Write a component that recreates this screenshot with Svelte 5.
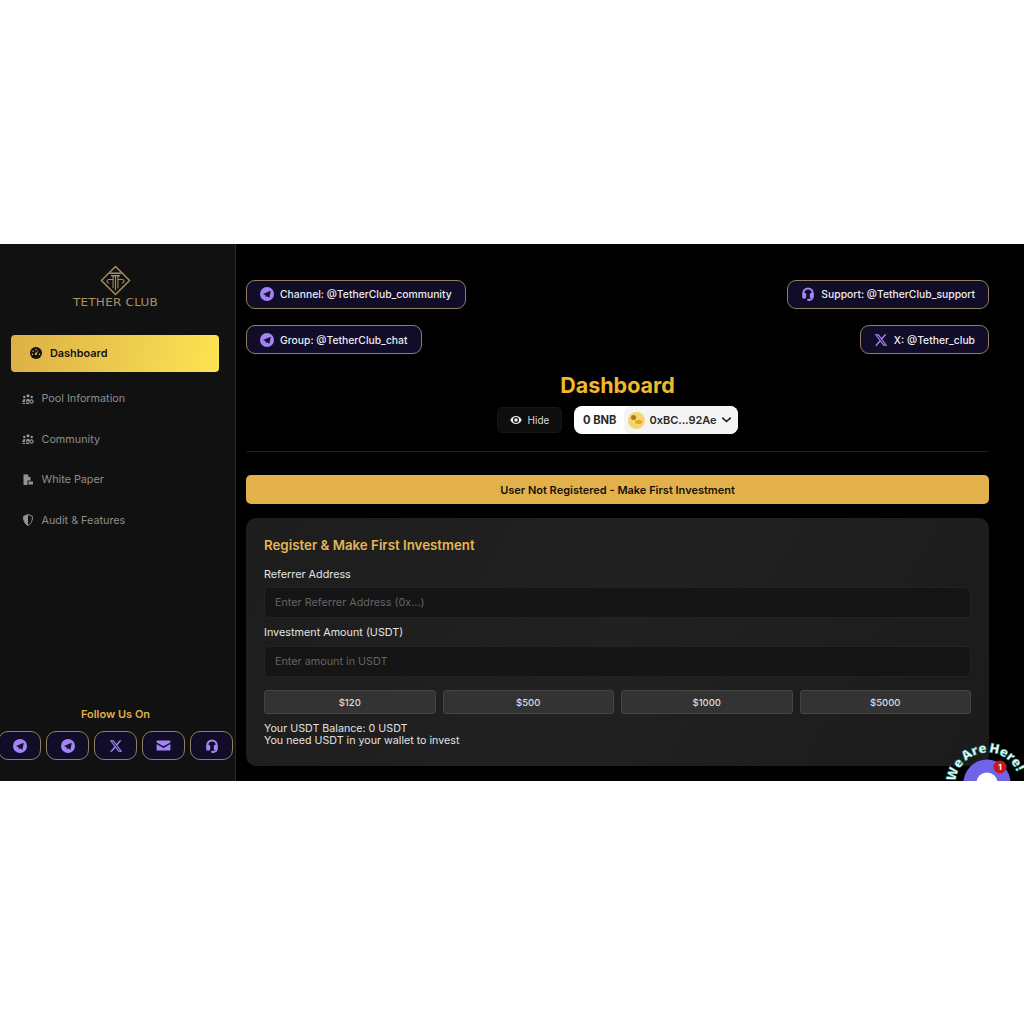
<script>
  const topLeft = [
    { icon: 'tg', text: 'Channel: @TetherClub_community' },
    { icon: 'tg', text: 'Group: @TetherClub_chat' }
  ];
  const topRight = [
    { icon: 'headset', text: 'Support: @TetherClub_support' },
    { icon: 'x', text: 'X: @Tether_club' }
  ];
  const nav = [
    { icon: 'users', text: 'Pool Information' },
    { icon: 'users', text: 'Community' },
    { icon: 'pdf', text: 'White Paper' },
    { icon: 'shield', text: 'Audit & Features' }
  ];
  const socials = ['tg', 'tg', 'x', 'mail', 'headset'];
  const amounts = ['$120', '$500', '$1000', '$5000'];
</script>

{#snippet glyph(name)}
  {#if name === 'tg'}
    <svg class="ico" viewBox="0 0 24 24"><circle cx="12" cy="12" r="12" fill="#a384f7" /><path d="M5.200 11.800 17.400 6.900c.6-.2 1.100.1.9.9l-2 9.800c-.2.7-.6.8-1.200.5l-3.100-2.300-1.500 1.400c-.3.3-.5.3-.6-.1l-.6-3.600-3.600-1.100c-.7-.2-.7-.6-.1-.9z" fill="#15102e" /></svg>
  {:else if name === 'x'}
    <svg class="ico" viewBox="0 0 24 24"><path fill="#9f86f0" d="M18.244 2.250h3.308l-7.227 8.260 8.502 11.240H16.170l-5.214-6.817L4.990 21.750H1.680l7.730-8.835L1.254 2.250H8.080l4.713 6.231zm-1.161 17.520h1.833L7.084 4.126H5.117z" /></svg>
  {:else if name === 'mail'}
    <svg class="ico mail" viewBox="0 0 24 24"><path fill="#a384f7" d="M2 4h20c.6 0 1 .4 1 1v2.100l-11 6.200L1 7.100V5c0-.6.4-1 1-1z" /><path fill="#a384f7" d="M1 9.600l11 6.200 11-6.200V19c0 .6-.4 1-1 1H2c-.6 0-1-.4-1-1z" /></svg>
  {:else if name === 'headset'}
    <svg class="ico" viewBox="0 0 24 24"><path fill="none" stroke="#a384f7" stroke-width="3.400" d="M4 14v-3.500a8 8 0 0 1 16 0V14" /><rect x="2" y="10" width="7" height="10" rx="3" fill="#a384f7" /><rect x="15" y="10" width="7" height="10" rx="3" fill="#a384f7" /><path fill="none" stroke="#a384f7" stroke-width="2" d="M20 18c0 3-2 4-5 4" /><rect x="10.500" y="20" width="6.500" height="4" rx="2" fill="#a384f7" /></svg>
  {:else if name === 'users'}
    <svg class="nav-ico" viewBox="0 0 24 24" fill="#949494"><circle cx="12" cy="5.500" r="3.200" /><circle cx="4.500" cy="8" r="2.400" /><circle cx="19.500" cy="8" r="2.400" /><path d="M8 17c0-3 1.500-5.500 4-5.500s4 2.500 4 5.500z" /><path d="M1 18c0-3 1.300-6 3.500-6 1 0 1.800.4 2.300 1.200C6.200 14.500 6 16 6 18z" /><circle cx="19" cy="17" r="3.300" fill="none" stroke="#949494" stroke-width="2.200" /><rect x="8" y="19" width="6" height="3" rx="1" /><rect x="1" y="19.500" width="5" height="2.500" rx="1" /></svg>
  {:else if name === 'pdf'}
    <svg class="nav-ico" viewBox="0 0 24 24" fill="#949494"><path d="M3 1h9l5 5v7h-6v9H5c-1.100 0-2-.9-2-2z" /><path d="M12.800 1v5h5z" fill="#111" /><rect x="13" y="15" width="9" height="6" rx="1" /></svg>
  {:else if name === 'shield'}
    <svg class="nav-ico" viewBox="0 0 24 24"><path d="M12 1 3 4.800c0 7 1.500 14 9 18.200 7.500-4.200 9-11.200 9-18.200z" fill="none" stroke="#949494" stroke-width="2" /><path d="M12 1 3 4.800c0 7 1.500 14 9 18.200z" fill="#949494" /></svg>
  {:else if name === 'gauge'}
    <svg class="gauge" viewBox="0 0 24 24"><circle cx="12" cy="12" r="12" fill="#111" /><circle cx="12" cy="5.500" r="1.600" fill="#e0b94a" /><circle cx="6.300" cy="8.500" r="1.600" fill="#e0b94a" /><circle cx="5" cy="14.500" r="1.600" fill="#e0b94a" /><circle cx="19" cy="14.500" r="1.600" fill="#e0b94a" /><path d="M17.500 6.500 13.600 13a2.200 2.200 0 1 1-2.400-1.200z" fill="#e0b94a" /></svg>
  {/if}
{/snippet}

<div class="app">
  <aside class="sidebar">
    <div class="brand">
      <svg class="logo" viewBox="0 0 32 32" fill="none" stroke="#a78d58" stroke-width="1.100">
        <path d="M16 1.500 30.500 16 16 30.500 1.500 16z" stroke-width="1.500" />
        <path d="M10 8.500h12M11.500 11h9" stroke-width="1.500" />
        <path d="M13.500 11v13M16 11v15M18.500 11v13" />
        <path d="M13.500 15H9.500a1.800 1.800 0 1 0 0 3.500M18.500 15h4a1.800 1.800 0 1 1 0 3.500" />
      </svg>
      <span class="brand-name">TETHER CLUB</span>
    </div>

    <nav class="nav">
      <div class="nav-active">
        {@render glyph('gauge')}
        <span>Dashboard</span>
      </div>
      {#each nav as item}
        <div class="nav-item">
          {@render glyph(item.icon)}
          <span>{item.text}</span>
        </div>
      {/each}
    </nav>

    <div class="follow">
      <div class="follow-title">Follow Us On</div>
      <div class="follow-row">
        {#each socials as s}
          <div class="social">{@render glyph(s)}</div>
        {/each}
      </div>
    </div>
  </aside>

  <main class="main">
    <div class="links">
      <div class="link-col">
        {#each topLeft as l}
          <div class="pill">{@render glyph(l.icon)}<span>{l.text}</span></div>
        {/each}
      </div>
      <div class="link-col right">
        {#each topRight as l}
          <div class="pill">{@render glyph(l.icon)}<span>{l.text}</span></div>
        {/each}
      </div>
    </div>

    <h1 class="title">Dashboard</h1>

    <div class="wallet-row">
      <div class="hide">
        <svg viewBox="0 0 24 24" class="eye"><path fill="#f2f2f2" d="M12 4C6.500 4 2.300 8 .6 12c1.700 4 5.900 8 11.400 8s9.700-4 11.400-8C21.700 8 17.500 4 12 4z" /><circle cx="12" cy="12" r="6" fill="#0e0e0e" /><circle cx="12" cy="12" r="3.500" fill="#f2f2f2" /></svg>
        <span>Hide</span>
      </div>
      <div class="wallet">
        <span class="bnb">0 BNB</span>
        <div class="addr">
          <span class="avatar"><i class="a1"></i><i class="a2"></i></span>
          <span>0xBC...92Ae</span>
          <svg viewBox="0 0 12 8" class="chev"><path d="M1 1.500 6 6l5-4.500" fill="none" stroke="#222" stroke-width="2.200" stroke-linecap="round" stroke-linejoin="round" /></svg>
        </div>
      </div>
    </div>

    <div class="divider"></div>

    <div class="banner">User Not Registered - Make First Investment</div>

    <section class="card">
      <h2>Register &amp; Make First Investment</h2>
      <label class="lbl" for="ref">Referrer Address</label>
      <input id="ref" class="field" placeholder="Enter Referrer Address (0x...)" />
      <label class="lbl second" for="amt">Investment Amount (USDT)</label>
      <input id="amt" class="field" placeholder="Enter amount in USDT" />
      <div class="amounts">
        {#each amounts as a}
          <button class="amount">{a}</button>
        {/each}
      </div>
      <p class="note">Your USDT Balance: 0 USDT<br />You need USDT in your wallet to invest</p>
    </section>

    <div class="chat">
      <svg viewBox="0 0 90 60" class="chat-svg">
        <defs><path id="arc" d="M14.500 48 A32 32 0 0 1 78.500 45" /></defs>
        <circle cx="46" cy="45" r="23.500" fill="#6f64e8" />
        <circle cx="46" cy="45" r="10.500" fill="#fff" />
        <circle cx="59" cy="29" r="6.500" fill="#c8171d" />
        <text x="59" y="32" class="badge">1</text>
        <text class="we"><textPath href="#arc" startOffset="4">We Are Here!</textPath></text>
      </svg>
    </div>
  </main>
</div>

<style>
  :global(body) {
    margin: 0;
    background: #fff;
    font-family: Inter, "Liberation Sans", sans-serif;
  }
  .app {
    margin-top: 244px;
    height: 537px;
    display: flex;
    background: #000;
    overflow: hidden;
    position: relative;
  }
  .sidebar {
    width: 235px;
    flex: none;
    background: #111;
    border-right: 1px solid #2b2b2b;
    display: flex;
    flex-direction: column;
  }
  .brand {
    margin-top: 21px;
    padding-right: 4px;
    display: flex;
    flex-direction: column;
    align-items: center;
  }
  .logo { width: 31px; height: 31px; display: block; }
  .brand-name {
    font-family: "DejaVu Sans", sans-serif;
    font-size: 10px;
    line-height: 14px;
    letter-spacing: .2px;
    color: #ab9462;
    transform: scaleX(1.2);
  }
  .nav {
    margin-top: 25px;
    display: flex;
    flex-direction: column;
  }
  .nav-active {
    margin: 0 16px 0 11px;
    height: 37px;
    box-sizing: border-box;
    border-radius: 4px;
    background: linear-gradient(100deg, #dcb045 0%, #ecc94e 50%, #fde452 100%);
    display: flex;
    align-items: center;
    gap: 8px;
    padding: 0 0 1px 19px;
    font-size: 10.900px;
    font-weight: 600;
    color: #141414;
  }
  .gauge { width: 12px; height: 12px; display: block; }
  .nav-item {
    height: 40.600px;
    display: flex;
    align-items: center;
    gap: 8px;
    padding-left: 21.500px;
    font-size: 10.800px;
    color: #8e8e8e;
  }
  .nav-active + .nav-item { margin-top: 6.300px; }
  .nav-ico { width: 12px; height: 12px; display: block; flex: none; }
  .follow { margin-top: auto; padding-bottom: 21px; }
  .follow-title {
    text-align: center;
    padding-right: 4px;
    font-size: 11px;
    font-weight: 600;
    line-height: 14px;
    color: #dfae4b;
    margin-bottom: 10px;
  }
  .follow-row {
    display: flex;
    justify-content: center;
    gap: 5.500px;
    padding-right: 4px;
  }
  .social {
    width: 42.500px;
    height: 29px;
    box-sizing: border-box;
    flex: none;
    border: 1px solid #8f8060;
    border-radius: 10px;
    background: #110d28;
    display: flex;
    align-items: center;
    justify-content: center;
  }
  .ico { width: 14px; height: 14px; display: block; flex: none; }
  .ico.mail { width: 15px; height: 15px; }
  .main {
    flex: 1;
    min-width: 0;
    padding: 35.500px 35px 0 10px;
    display: flex;
    flex-direction: column;
    position: relative;
  }
  .links { display: flex; justify-content: space-between; }
  .link-col {
    display: flex;
    flex-direction: column;
    align-items: flex-start;
    gap: 16.500px;
  }
  .link-col.right { align-items: flex-end; }
  .pill {
    height: 29px;
    box-sizing: border-box;
    border: 1px solid #8f8060;
    border-radius: 9px;
    background: #110d28;
    display: flex;
    align-items: center;
    gap: 6px;
    padding: 0 13px;
    font-size: 10.350px;
    font-weight: 500;
    color: #ececf2;
    white-space: nowrap;
  }
  .title {
    margin: 17px 0 0;
    text-align: center;
    font-size: 21.500px;
    line-height: 28px;
    font-weight: 700;
    color: #f0b72f;
  }
  .wallet-row {
    margin-top: 7px;
    display: flex;
    justify-content: center;
    align-items: center;
    gap: 12px;
  }
  .hide {
    width: 65px;
    height: 26px;
    box-sizing: border-box;
    background: #0e0e0e;
    border: 1px solid #161616;
    border-radius: 5px;
    display: flex;
    align-items: center;
    justify-content: center;
    gap: 6px;
    font-size: 10px;
    color: #d6d6d6;
  }
  .eye { width: 12px; height: 12px; display: block; }
  .wallet {
    height: 28px;
    width: 164px;
    box-sizing: border-box;
    background: #fff;
    border-radius: 8px;
    display: flex;
    align-items: center;
    font-size: 11.200px;
    font-weight: 700;
    color: #2a2a2a;
    white-space: nowrap;
  }
  .bnb { padding: 0 7px 0 9px; }
  .addr {
    flex: 1;
    align-self: stretch;
    background: #f4f4f4;
    border-radius: 8px;
    display: flex;
    align-items: center;
    gap: 5px;
    padding-left: 4px;
  }
  .addr > span:nth-child(2) { font-size: 11px; font-weight: 600; letter-spacing: -.05px; }
  .avatar {
    width: 17px;
    height: 17px;
    border-radius: 50%;
    background: #f6d469;
    position: relative;
    flex: none;
  }
  .a1, .a2 { position: absolute; border-radius: 50%; background: #a5791e; }
  .a1 { width: 5px; height: 5px; left: 3px; top: 3px; }
  .a2 { width: 7px; height: 4px; left: 7px; top: 8px; background: #e2a52e; }
  .chev { width: 9px; height: 6px; display: block; }
  .divider {
    height: 1px;
    background: #1e1e1e;
    margin-top: 17px;
    flex: none;
  }
  .banner {
    margin-top: 23px;
    height: 29px;
    flex: none;
    border-radius: 5px;
    background: #e3b14c;
    color: #14110a;
    font-size: 11px;
    font-weight: 600;
    display: flex;
    align-items: center;
    justify-content: center;
  }
  .card {
    margin-top: 14px;
    height: 248px;
    box-sizing: border-box;
    flex: none;
    border-radius: 10px;
    background: linear-gradient(120deg, #1d1d1d, #212121 50%, #1b1b1b);
    padding: 18px 18px 0;
    display: flex;
    flex-direction: column;
  }
  h2 {
    margin: 0;
    font-size: 13.300px;
    line-height: 19px;
    font-weight: 600;
    color: #e3b656;
  }
  .lbl {
    margin-top: 13px;
    font-size: 10.800px;
    line-height: 14px;
    color: #e4e4e4;
    margin-bottom: 5px;
  }
  .lbl.second { margin-top: 8px; margin-bottom: 6px; }
  .field {
    height: 31px;
    box-sizing: border-box;
    width: 100%;
    background: #151515;
    border: 1px solid #222;
    border-radius: 5px;
    padding: 0 10px;
    font: 400 10.800px Inter, "Liberation Sans", sans-serif;
    color: #ddd;
    outline: none;
  }
  .field::placeholder { color: #646464; opacity: 1; }
  .amounts {
    margin-top: 13px;
    display: grid;
    grid-template-columns: repeat(4, 1fr);
    gap: 7px;
  }
  .amount {
    height: 24px;
    background: #333;
    border: 1px solid #454545;
    border-radius: 3px;
    font: 500 9.500px Inter, "Liberation Sans", sans-serif;
    color: #dedede;
    padding: 0;
  }
  .note {
    margin: 9px 0 0;
    font-size: 10.700px;
    line-height: 12px;
    color: #e2e2e2;
  }
  .chat {
    position: absolute;
    left: 705px;
    top: 494px;
    width: 90px;
    height: 60px;
  }
  .chat-svg { display: block; width: 90px; height: 60px; overflow: visible; }
  .we {
    font: 800 13px "Open Sans", Inter, sans-serif;
    fill: #eafffb;
    stroke: #1f9c94;
    stroke-width: .5px;
    word-spacing: -1.500px;
  }
  .badge {
    font: 700 8px Inter, sans-serif;
    fill: #fff;
    text-anchor: middle;
  }
</style>
